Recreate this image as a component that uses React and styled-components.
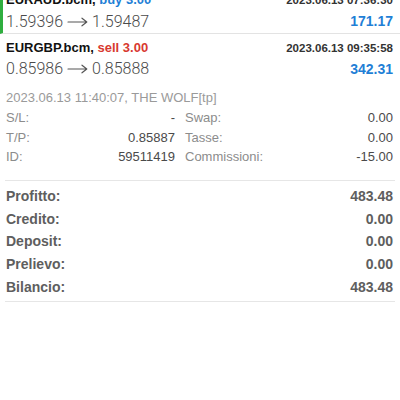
import React from "react";
import styled, { createGlobalStyle } from "styled-components";

const Global = createGlobalStyle`
  html, body { margin: 0; padding: 0; background: #fff; }
  body { font-family: "Liberation Sans", Arial, sans-serif; overflow: hidden; }
`;

const Page = styled.div`
  width: 400px;
  height: 400px;
  overflow: hidden;
  background: #fff;
`;

const List = styled.div`
  margin-top: -14px;
  display: flex;
  flex-direction: column;
`;

const Item = styled.div`
  display: flex;
  flex-direction: column;
  padding: 4px 7px 0 6px;
  border-left: ${(p) => (p.$marked ? "3px solid #2fae3f" : "0")};
  padding-left: ${(p) => (p.$marked ? "3px" : "6px")};
  border-bottom: ${(p) => (p.$divider ? "1px solid #e3e3e3" : "0")};
`;

const Row = styled.div`
  display: flex;
  justify-content: space-between;
  align-items: center;
  height: ${(p) => p.$h || 19}px;
`;

const Title = styled.div`
  font-size: 13px;
  font-weight: 700;
  color: #111;
  white-space: nowrap;
`;

const Side = styled.span`
  color: ${(p) => (p.$buy ? "#1f7fd6" : "#d8392f")};
`;

const Time = styled.div`
  font-size: 11.5px;
  font-weight: 700;
  color: #333;
`;

const Price = styled.div`
  display: flex;
  align-items: center;
  font-family: Roboto, "Liberation Sans", sans-serif;
  font-weight: 300;
  font-size: 16px;
  color: #4a4a4a;
  white-space: nowrap;
`;

const ArrowSvg = styled.svg`
  width: 21px;
  height: 10px;
  margin: 1px 4px 0 4px;
  flex: none;
`;

const Profit = styled.div`
  font-size: 14px;
  font-weight: 700;
  color: #1f7fd6;
`;

const Details = styled.div`
  display: flex;
  flex-direction: column;
  margin-top: 9px;
  padding-bottom: 13px;
`;

const Comment = styled.div`
  font-size: 13px;
  color: #9a9a9a;
  line-height: 18px;
  margin-bottom: 1px;
`;

const Grid = styled.div`
  display: grid;
  grid-template-columns: 1fr 208px;
  column-gap: 10px;
`;

const Cell = styled.div`
  display: flex;
  justify-content: space-between;
  font-size: 13px;
  line-height: 19.5px;
`;

const Label = styled.span`
  color: #8c8c8c;
`;

const Value = styled.span`
  color: #4a4a4a;
`;

const Divider = styled.div`
  height: 1px;
  background: #e6e6e6;
  margin: 0 5px;
`;

const Summary = styled.div`
  display: flex;
  flex-direction: column;
  padding: 4px 7px 3px 6px;
`;

const SumRow = styled.div`
  display: flex;
  justify-content: space-between;
  align-items: center;
  height: 22.75px;
  font-size: 14px;
  font-weight: 700;
  color: #5e5e5e;
`;

const details = [
  ["S/L:", "-", "Swap:", "0.00"],
  ["T/P:", "0.85887", "Tasse:", "0.00"],
  ["ID:", "59511419", "Commissioni:", "-15.00"],
];

const summary = [
  ["Profitto:", "483.48"],
  ["Credito:", "0.00"],
  ["Deposit:", "0.00"],
  ["Prelievo:", "0.00"],
  ["Bilancio:", "483.48"],
];

function Arrow() {
  return (
    <ArrowSvg viewBox="0 0 21 10" aria-label="→">
      <path
        d="M1 5 H19.5 M15 1.2 L19.8 5 L15 8.8"
        fill="none"
        stroke="#555"
        strokeWidth="1.2"
        strokeLinecap="round"
        strokeLinejoin="round"
      />
    </ArrowSvg>
  );
}

function PriceLine({ from, to }) {
  return (
    <Price>
      <span>{from}</span>
      <Arrow />
      <span>{to}</span>
    </Price>
  );
}

export default function App() {
  return (
    <Page>
      <Global />
      <List>
        <Item $marked $divider>
          <Row $h={19}>
            <Title>
              EURAUD.bcm, <Side $buy>buy 3.00</Side>
            </Title>
            <Time>2023.06.13 07:36:30</Time>
          </Row>
          <Row $h={24}>
            <PriceLine from="1.59396" to="1.59487" />
            <Profit>171.17</Profit>
          </Row>
        </Item>
        <Item>
          <Row $h={19}>
            <Title>
              EURGBP.bcm, <Side>sell 3.00</Side>
            </Title>
            <Time>2023.06.13 09:35:58</Time>
          </Row>
          <Row $h={23}>
            <PriceLine from="0.85986" to="0.85888" />
            <Profit>342.31</Profit>
          </Row>
          <Details>
            <Comment>2023.06.13 11:40:07, THE WOLF[tp]</Comment>
            <Grid>
              {details.map(([l1, v1, l2, v2]) => (
                <React.Fragment key={l1}>
                  <Cell>
                    <Label>{l1}</Label>
                    <Value>{v1}</Value>
                  </Cell>
                  <Cell>
                    <Label>{l2}</Label>
                    <Value>{v2}</Value>
                  </Cell>
                </React.Fragment>
              ))}
            </Grid>
          </Details>
        </Item>
        <Divider />
        <Summary>
          {summary.map(([l, v]) => (
            <SumRow key={l}>
              <span>{l}</span>
              <span>{v}</span>
            </SumRow>
          ))}
        </Summary>
        <Divider />
      </List>
    </Page>
  );
}
